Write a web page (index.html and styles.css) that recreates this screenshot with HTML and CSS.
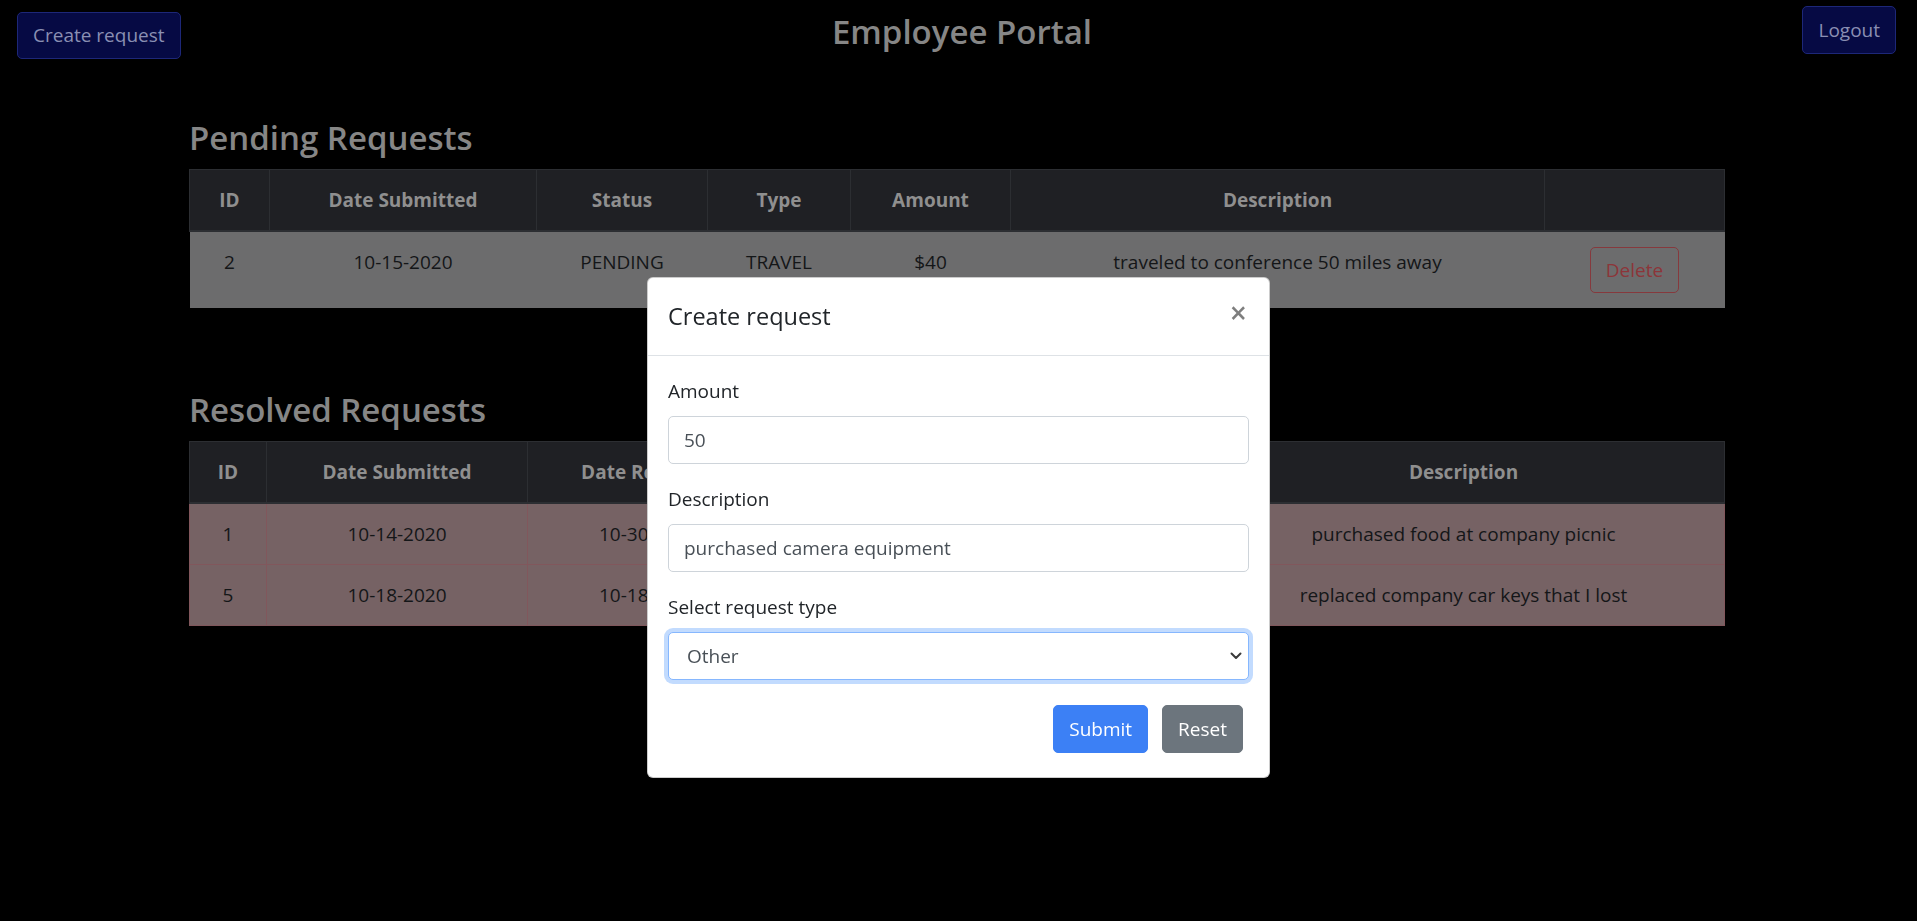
FILE: index.html
```html
<!DOCTYPE html>
<html lang="en">
<head>
<meta charset="utf-8">
<title>Employee Portal</title>
<link rel="stylesheet" href="styles.css">
</head>
<body>
<header class="topbar">
  <div class="topbar-left"><button class="btn btn-navy btn-create" type="button">Create request</button></div>
  <h1 class="portal-title">Employee Portal</h1>
  <div class="topbar-right"><button class="btn btn-navy btn-logout" type="button">Logout</button></div>
</header>

<main class="requests">
  <section class="request-section pending">
    <h2 class="section-title">Pending Requests</h2>
    <table class="req-table pending-table">
      <thead>
        <tr>
          <th class="c-id">ID</th>
          <th class="c-date">Date Submitted</th>
          <th class="c-status">Status</th>
          <th class="c-type">Type</th>
          <th class="c-amount">Amount</th>
          <th class="c-desc">Description</th>
          <th class="c-action"></th>
        </tr>
      </thead>
      <tbody>
        <tr>
          <td>2</td>
          <td>10-15-2020</td>
          <td>PENDING</td>
          <td>TRAVEL</td>
          <td>$40</td>
          <td>traveled to conference 50 miles away</td>
          <td><button class="btn btn-outline-danger" type="button">Delete</button></td>
        </tr>
      </tbody>
    </table>
  </section>

  <section class="request-section resolved">
    <h2 class="section-title">Resolved Requests</h2>
    <table class="req-table resolved-table">
      <thead>
        <tr>
          <th class="r-id">ID</th>
          <th class="r-date">Date Submitted</th>
          <th class="r-resolved">Date Resolved</th>
          <th class="r-status">Status</th>
          <th class="r-type">Type</th>
          <th class="r-amount">Amount</th>
          <th class="r-desc">Description</th>
        </tr>
      </thead>
      <tbody>
        <tr>
          <td>1</td>
          <td>10-14-2020</td>
          <td>10-30-2020</td>
          <td>DENIED</td>
          <td>FOOD</td>
          <td>$20</td>
          <td>purchased food at company picnic</td>
        </tr>
        <tr>
          <td>5</td>
          <td>10-18-2020</td>
          <td>10-18-2020</td>
          <td>DENIED</td>
          <td>OTHER</td>
          <td>$100</td>
          <td>replaced company car keys that I lost</td>
        </tr>
      </tbody>
    </table>
  </section>
</main>

<div class="modal" role="dialog" aria-modal="true">
  <div class="modal-dialog">
    <div class="modal-content">
      <div class="modal-header">
        <h5 class="modal-title">Create request</h5>
        <button class="close" type="button" aria-label="Close">&times;</button>
      </div>
      <form class="modal-body">
        <div class="form-group">
          <label class="form-label" for="amount">Amount</label>
          <input class="form-control" id="amount" type="text" value="50">
        </div>
        <div class="form-group">
          <label class="form-label" for="desc">Description</label>
          <input class="form-control" id="desc" type="text" value="purchased camera equipment">
        </div>
        <div class="form-group">
          <label class="form-label" for="rtype">Select request type</label>
          <div class="select-wrap">
            <select class="form-control form-select is-focused" id="rtype">
              <option>Other</option>
            </select>
            <svg class="select-arrow" width="12" height="8" viewBox="0 0 12 8" aria-hidden="true"><path d="M1.5 1.5 L6 6 L10.5 1.5" fill="none" stroke="#3a3a3a" stroke-width="2" stroke-linecap="round" stroke-linejoin="round"/></svg>
          </div>
        </div>
        <div class="form-actions">
          <button class="btn btn-primary" type="button">Submit</button>
          <button class="btn btn-secondary" type="button">Reset</button>
        </div>
      </form>
    </div>
  </div>
</div>
</body>
</html>
```

FILE: styles.css
```css
* { box-sizing: border-box; }

html, body {
  margin: 0;
  padding: 0;
  background: #000;
}

body {
  font-family: "Open Sans", "Noto Sans", sans-serif;
  font-size: 19px;
  line-height: 30px;
  color: #141618;
  overflow: hidden;
}

.btn {
  display: inline-block;
  font-family: inherit;
  font-size: 19px;
  line-height: 30px;
  font-weight: 400;
  padding: 8px 15px;
  border: 1px solid transparent;
  border-radius: 5px;
  background: transparent;
  cursor: pointer;
}

/* top bar */
.topbar {
  display: grid;
  grid-template-columns: 1fr auto 1fr;
  align-items: start;
}

.topbar-left { padding: 12px 0 0 17px; }
.topbar-right { padding: 6px 21px 0 0; display: flex; justify-content: flex-end; }

.btn-navy {
  background: #060a44;
  border-color: #1d2778;
  color: #8a8fb3;
}

.btn-create { height: 47px; padding-top: 7px; }
.btn-logout { height: 48px; }

.portal-title {
  margin: 11px 0 0 7px;
  font-size: 33px;
  line-height: 42px;
  font-weight: 600;
  color: #868686;
  text-align: center;
}

/* sections */
.requests {
  width: 1536px;
  margin: 0 0 0 189px;
  padding-top: 58px;
}

.resolved { margin-top: 81px; }

.section-title {
  margin: 0 0 10px;
  font-size: 33px;
  line-height: 42px;
  font-weight: 600;
  color: #868686;
}

.req-table {
  width: 100%;
  border-collapse: collapse;
  table-layout: fixed;
  text-align: center;
}

.req-table th,
.req-table td {
  padding: 15px;
  vertical-align: top;
  font-size: 19px;
  line-height: 30px;
}

.req-table th {
  background: #1f2024;
  color: #8f8f8f;
  font-weight: 700;
  border: 1px solid #2c2e32;
  border-bottom-width: 2px;
}

.pending-table td {
  background: #6c6c6d;
  border-top: 1px solid #5d5e60;
}

.resolved-table td {
  background: #766264;
  border: 1px solid #81575c;
}

.c-id { width: 80px; }
.c-date { width: 267px; }
.c-status { width: 171px; }
.c-type { width: 143px; }
.c-amount { width: 160px; }
.c-desc { width: 534px; }

.r-id { width: 77px; }
.r-date { width: 261px; }
.r-resolved { width: 242px; }
.r-status { width: 150px; }
.r-type { width: 130px; }
.r-amount { width: 153px; }

.btn-outline-danger {
  border-color: #86393d;
  color: #8c3539;
  padding: 7px 15px;
  height: 46px;
}

/* modal */
.modal {
  position: fixed;
  inset: 0;
  display: flex;
  justify-content: center;
  align-items: flex-start;
}

.modal-dialog {
  width: 623px;
  margin-top: 277px;
}

.modal-content {
  background: #fff;
  border: 1px solid rgba(0, 0, 0, .2);
  border-radius: 6px;
  color: #212529;
}

.modal-header {
  display: flex;
  align-items: flex-start;
  justify-content: space-between;
  padding: 20px;
  border-bottom: 1px solid #dee2e6;
}

.modal-title {
  margin: 0;
  font-size: 23.5px;
  line-height: 37px;
  font-weight: 500;
  color: #212529;
}

.close {
  margin: -20px -20px -20px auto;
  padding: 20px 22px 20px 20px;
  border: 0;
  background: transparent;
  font-family: inherit;
  font-size: 30px;
  line-height: 1;
  font-weight: 600;
  color: #000;
  opacity: .5;
}

.modal-body {
  display: block;
  margin: 0;
  padding: 20px;
}

.form-group { margin-bottom: 20px; }

.form-label {
  display: block;
  margin-bottom: 10px;
  font-size: 19px;
  line-height: 30px;
  color: #212529;
}

.form-control {
  display: block;
  width: 100%;
  height: 48px;
  padding: 7px 15px;
  font-family: inherit;
  font-size: 19px;
  line-height: 30px;
  color: #495057;
  background: #fff;
  border: 1px solid #ced4da;
  border-radius: 5px;
  outline: none;
}

.select-wrap { position: relative; }

.form-select {
  appearance: none;
  -webkit-appearance: none;
  padding-left: 18px;
}

.form-select.is-focused {
  border-color: #86b7fe;
  box-shadow: 0 0 0 4px rgba(13, 110, 253, .25);
}

.select-arrow {
  position: absolute;
  right: 7px;
  top: 20px;
}

.form-actions {
  display: flex;
  justify-content: flex-end;
  gap: 14px;
  margin: 25px 6px 4px 0;
}

.btn-primary {
  background: #3c80f5;
  border-color: #3c80f5;
  color: #fff;
}

.btn-secondary {
  background: #6c757d;
  border-color: #6c757d;
  color: #fff;
}
```
